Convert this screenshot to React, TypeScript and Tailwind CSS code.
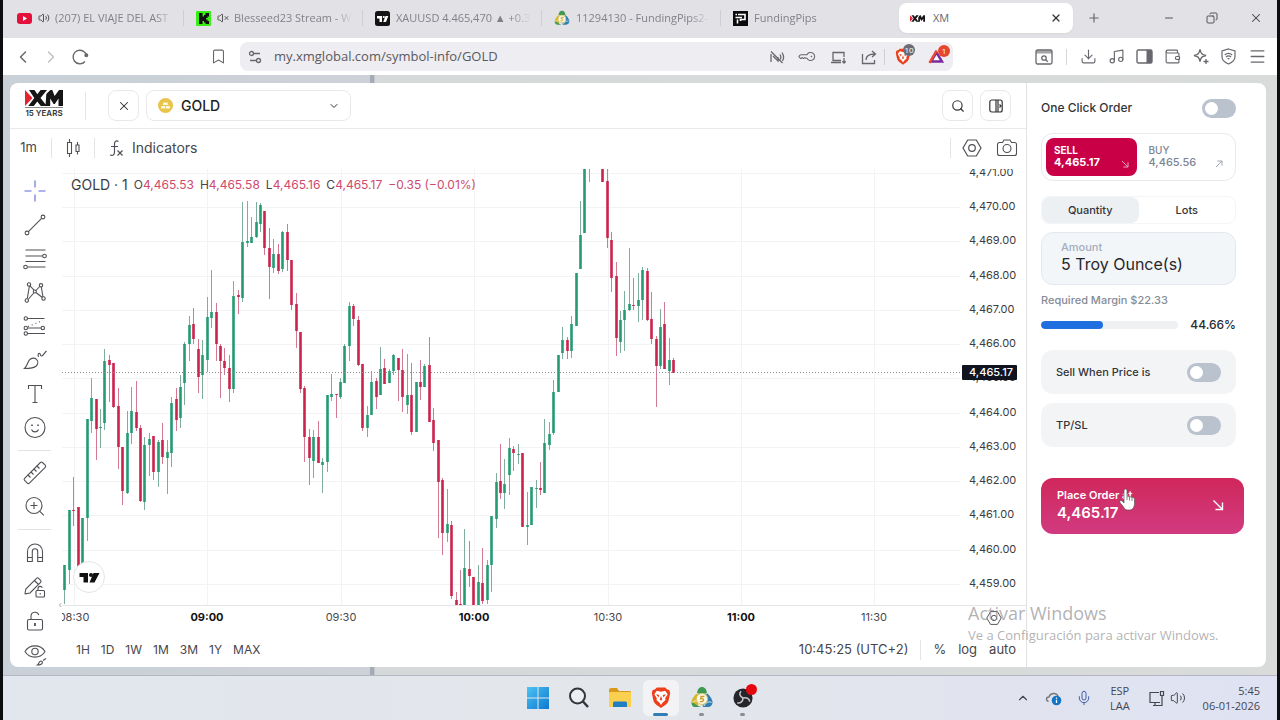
import React from "react";
import {
  Bookmark,
  ChevronDown,
  ChevronLeft,
  ChevronRight,
  ChevronUp,
  Copy,
  Download,
  KeyRound,
  Menu,
  Mic,
  Minus,
  Music,
  Plus,
  Search,
  Volume2,
  VolumeX,
  Wallet,
  X,
} from "lucide-react";

type Candle = [dir: "u" | "d", high: number, top: number, bottom: number, low: number];

/* One entry per minute: direction, wick top, body top, body bottom, wick bottom. */
const CANDLES: (Candle | null)[] = [
  ["u", 565, 565, 590, 604], ["u", 510, 510, 570, 584], ["d", 477, 510, 511, 526], ["d", 507, 507, 570, 570],
  ["u", 518, 518, 565, 565], ["u", 419, 419, 518, 541], ["u", 378, 398, 421, 433], ["d", 399, 399, 429, 460],
  ["u", 409, 427, 428, 448], ["u", 349, 361, 423, 430], ["d", 355, 360, 365, 402], ["d", 363, 363, 407, 408],
  ["d", 388, 406, 447, 469], ["d", 447, 447, 491, 505], ["u", 411, 433, 493, 494], ["u", 387, 411, 433, 444],
  ["d", 381, 412, 428, 431], ["d", 425, 428, 501, 502], ["u", 437, 445, 502, 510], ["u", 433, 439, 445, 476],
  ["d", 436, 436, 472, 480], ["u", 440, 442, 472, 487], ["d", 423, 440, 457, 464], ["u", 440, 452, 458, 494],
  ["u", 397, 403, 453, 467], ["d", 388, 399, 420, 431], ["u", 375, 387, 418, 428], ["u", 342, 344, 383, 405],
  ["u", 316, 325, 344, 361], ["d", 308, 324, 339, 344], ["d", 339, 349, 377, 393], ["u", 340, 355, 375, 399],
  ["u", 297, 317, 360, 372], ["u", 270, 312, 318, 328], ["d", 303, 312, 344, 361], ["d", 344, 346, 361, 398],
  ["d", 348, 361, 368, 375], ["d", 355, 368, 389, 402], ["u", 281, 296, 389, 393], ["d", 290, 295, 297, 314],
  ["u", 202, 242, 298, 302], ["u", 201, 241, 243, 247], ["u", 217, 237, 243, 243], ["u", 202, 222, 237, 238],
  ["u", 203, 205, 224, 232], ["d", 211, 211, 248, 255], ["d", 228, 248, 267, 299], ["u", 239, 254, 268, 273],
  ["d", 244, 254, 271, 274], ["u", 231, 232, 269, 272], ["d", 224, 232, 260, 271], ["d", 260, 260, 305, 310],
  ["d", 293, 304, 331, 348], ["d", 332, 332, 389, 393], ["d", 386, 388, 437, 462], ["d", 429, 437, 458, 485],
  ["u", 430, 437, 461, 478], ["d", 421, 437, 463, 463], ["u", 458, 462, 465, 493], ["u", 395, 395, 462, 472],
  ["u", 374, 394, 397, 401], ["d", 394, 394, 395, 418], ["u", 378, 382, 397, 399], ["u", 344, 346, 383, 383],
  ["u", 302, 306, 346, 361], ["d", 304, 306, 319, 326], ["d", 316, 320, 365, 366], ["d", 364, 364, 428, 431],
  ["u", 406, 415, 428, 437], ["u", 371, 382, 415, 415], ["d", 378, 381, 397, 409], ["u", 347, 369, 395, 395],
  ["d", 359, 368, 384, 384], ["u", 369, 371, 383, 383], ["u", 354, 355, 371, 375], ["d", 358, 358, 370, 401],
  ["d", 349, 370, 397, 412], ["u", 354, 395, 405, 414], ["d", 363, 395, 432, 435], ["u", 382, 382, 432, 432],
  ["d", 360, 382, 387, 400], ["u", 364, 366, 387, 387], ["d", 337, 365, 422, 422], ["d", 408, 420, 443, 451],
  ["d", 440, 440, 482, 538], ["d", 478, 480, 533, 555], ["u", 489, 524, 533, 542], ["d", 521, 525, 596, 599],
  ["d", 592, 600, 605, 605], ["d", 570, 604, 605, 605], ["u", 529, 568, 605, 605], ["d", 541, 569, 576, 587],
  ["d", 577, 577, 605, 605], ["u", 565, 582, 605, 605], ["d", 548, 583, 601, 604], ["u", 560, 565, 600, 604],
  ["u", 516, 516, 565, 592], ["u", 473, 482, 519, 528], ["d", 444, 481, 493, 499], ["u", 459, 484, 493, 509],
  ["u", 438, 448, 475, 495], ["d", 446, 449, 453, 471], ["u", 444, 454, 455, 464], ["d", 453, 453, 527, 527],
  ["u", 492, 525, 527, 545], ["u", 487, 487, 525, 525], ["u", 480, 488, 489, 508], ["d", 462, 488, 490, 495],
  ["u", 419, 443, 493, 493], ["u", 422, 434, 445, 450], ["u", 380, 392, 433, 435], ["u", 355, 355, 392, 392],
  ["u", 327, 340, 353, 359], ["d", 337, 340, 351, 359], ["u", 316, 324, 351, 358], ["u", 273, 273, 326, 326],
  ["u", 201, 235, 269, 269], ["u", 169, 169, 233, 233], ["u", 169, 169, 169, 182], null,
  null, ["d", 169, 169, 182, 182], ["d", 169, 181, 238, 248], ["d", 232, 240, 278, 292],
  ["d", 262, 276, 338, 356], ["u", 311, 320, 342, 353], ["u", 291, 310, 320, 351], ["u", 248, 304, 310, 311],
  ["d", 278, 305, 306, 310], ["u", 273, 300, 306, 322], ["u", 267, 270, 300, 320], ["d", 268, 271, 320, 321],
  ["d", 292, 319, 339, 344], ["d", 336, 339, 366, 407], ["u", 309, 327, 366, 369], ["d", 302, 324, 369, 369],
  ["u", 338, 360, 371, 385], ["d", 358, 360, 373, 373],
];

const PRICES = Array.from({ length: 13 }, (_, i) => 4471 - i);
const TIMES = ["08:30", "09:00", "09:30", "10:00", "10:30", "11:00", "11:30"];

const priceY = (p: number) => Math.round((4470 - p) * 34.27 + 39);

function Chart() {
  return (
    <svg viewBox="0 0 964 462" className="block h-full w-full font-[Inter,sans-serif]" role="img" aria-label="GOLD candlestick chart">
      <defs>
        <clipPath id="axis"><rect x="899" y="1" width="65" height="435" /></clipPath>
      </defs>
      {PRICES.map((p) => <rect key={p} x="0" y={priceY(p)} width="898" height="1" fill="#f3f3f5" />)}
      {TIMES.map((t, i) => <rect key={t} x={12 + Math.round(i * 133.4)} y="1" width="1" height="436" fill="#f3f3f5" />)}
      {CANDLES.map((c, i) => {
        if (!c) return null;
        const [dir, high, top, bottom, low] = c;
        const x = Math.round(2.4 + i * 4.445);
        const body = dir === "u" ? "#249b73" : "#cc234c";
        const wick = dir === "u" ? "#7fae9d" : "#d27a91";
        return (
          <g key={i}>
            <rect x={x} y={high - 168} width="1" height={Math.max(low - high, 1)} fill={wick} />
            {bottom > top && <rect x={x - 0.8} y={top - 168} width="2.600" height={bottom - top} fill={body} />}
          </g>
        );
      })}
      <line x1="0" x2="900" y1="204.5" y2="204.5" stroke="#8b8b90" strokeDasharray="1 2" />
      <rect x="0" y="437" width="964" height="1" fill="#e6e6ea" />
      <g clipPath="url(#axis)" fontSize="11" fill="#3c3c40">
        {PRICES.map((p) => (
          <text key={p} x="907" y={priceY(p) + 3}>{`4,${p - 4000}.00`}</text>
        ))}
      </g>
      <rect x="900" y="197" width="55" height="15" rx="1" fill="#11131f" />
      <text x="907" y="208" fontSize="11" fontWeight="500" fill="#fff">4,465.17</text>
      {TIMES.map((t, i) => {
        const hour = t.endsWith(":00");
        return (
          <text key={t} x={12 + Math.round(i * 133.4)} y="453" textAnchor="middle" fontSize="11" fontWeight={hour ? 700 : 400} fill={hour ? "#111" : "#4a4a4e"}>
            {t}
          </text>
        );
      })}
      <circle cx="27" cy="409" r="15.500" fill="#fff" stroke="#e4e4e8" />
      <path d="M17.500 405h8.500v9.500h-4.500v-5.500h-4zM32.500 414.500h-5l4-9.500h6z" fill="#111" />
      <circle cx="29" cy="407" r="2" fill="#111" />
    </svg>
  );
}

function Tool({ label, children }: { label: string; children: React.ReactNode }) {
  return (
    <button aria-label={label} className="flex h-[34px] w-full shrink-0 items-center justify-center">
      <svg viewBox="0 0 28 28" className="size-7" fill="none" stroke="#505056" strokeWidth="1.1">{children}</svg>
    </button>
  );
}

function ToolRail() {
  return (
    <div className="relative flex w-[52px] shrink-0 flex-col overflow-hidden pt-2 pr-[3px]">
      <Tool label="Cross"><path stroke="#5b66d6" d="M14 3.500v7M14 17.500v7M3.500 14h7M17.500 14h7" /></Tool>
      <Tool label="Trend line">
        <circle cx="6" cy="22" r="1.900" /><circle cx="22" cy="6" r="1.900" /><path d="M7.400 20.600 20.600 7.400" />
      </Tool>
      <Tool label="Fib retracement">
        <path d="M4.500 5h20M4.500 11h17.500M4.500 16.500h20M6.500 22h18" />
        <circle cx="23.500" cy="11" r="1.800" fill="#fff" /><circle cx="4.500" cy="22" r="1.800" fill="#fff" />
      </Tool>
      <Tool label="Patterns">
        <path d="m8.700 6.700 4.400 4.500M15 11.500 18.700 7.500M8.300 7.500 6.300 19.500M20.300 8l1.700 10M7.500 20l5.300-6M15 13.500l6 4.800" />
        <circle cx="8" cy="5.500" r="1.700" /><circle cx="20" cy="6.300" r="1.700" /><circle cx="13.800" cy="12.500" r="1.500" />
        <circle cx="5.800" cy="21.500" r="1.700" /><circle cx="22.500" cy="19.500" r="1.700" />
      </Tool>
      <Tool label="Prediction">
        <path d="M6.500 5.500h17M6.500 15h13.500M6.500 20.500h17.500" /><path strokeDasharray="1 3" d="m7 13.500 15-6" />
        <circle cx="4.800" cy="5.500" r="1.700" /><circle cx="4.800" cy="15" r="1.700" /><circle cx="4.800" cy="20.500" r="1.700" /><circle cx="21.800" cy="15" r="1.700" />
      </Tool>
      <Tool label="Brush">
        <path d="M3.500 21.500c2.500-2 3-6.500 5-8.700 2-2.200 5.200-2.200 7-.4s1.700 4.600-.3 6.600c-2.500 2.300-7 2.500-11.700 2.500zM17.500 10c-1-2.500 0-4.200 1.200-3.500 1 .6.500 2.500 2 2.500s2.800-3.500 4.800-5" />
      </Tool>
      <Tool label="Text"><path d="M7.500 8V4.500h13V8M14 4.500v17M11.500 21.500h5" /></Tool>
      <Tool label="Emoji">
        <circle cx="14" cy="12.500" r="10" /><path d="M10.500 14.500c1.200 3.200 5.800 3.200 7 0" /><path strokeWidth="1.600" d="M11 9.500v1.500M17 9.500v1.500" />
      </Tool>
      <span className="mx-2 my-1 h-px shrink-0 bg-[#e2e2e6]" />
      <Tool label="Measure">
        <path d="M3.600 20.300 19.400 4.500a1.500 1.500 0 0 1 2.100 0l2.700 2.700a1.500 1.500 0 0 1 0 2.100L8.400 25.100a1.500 1.500 0 0 1-2.100 0l-2.700-2.700a1.500 1.500 0 0 1 0-2.100zM7 17l2.500 2.500M10 14l2.500 2.500M13 11l2.500 2.500M16 8l2.500 2.500" />
      </Tool>
      <Tool label="Zoom in"><circle cx="13" cy="13.500" r="8" /><path d="m18.800 19.300 4 4M9.500 13.500h7M13 10v7" /></Tool>
      <span className="mx-2 my-1.5 h-px shrink-0 bg-[#e2e2e6]" />
      <Tool label="Magnet">
        <path d="M6.500 22.500v-10a7.500 7.500 0 0 1 15 0v10h-4.800v-10a2.700 2.700 0 0 0-5.400 0v10zM6.500 18.500h4.800M16.700 18.500h4.800" />
      </Tool>
      <Tool label="Stay in drawing mode">
        <path d="m4 20.500.8-4.500L15.500 5.300a1.500 1.500 0 0 1 2.100 0l2 2a1.500 1.500 0 0 1 0 2.100L9 20l-4.800.8zM13.500 7.500l4 4" />
        <rect x="15" y="17.500" width="8.500" height="6.500" rx="1" fill="#fff" /><path d="M17 17.500v-2a2.200 2.200 0 0 1 4.300-.6M19.200 20v1.500" />
      </Tool>
      <Tool label="Lock drawings">
        <rect x="6.500" y="12.500" width="15" height="10.500" rx="1.500" /><path d="M10 12.500V9a4 4 0 0 1 7.800-1" /><path strokeWidth="1.800" d="M14 16v3" />
      </Tool>
      <Tool label="Hide drawings">
        <path d="M4 10.500c4.500-7.500 15.500-7.500 20 0-4.500 7.500-15.500 7.500-20 0z" /><circle cx="14" cy="10.500" r="3.200" />
        <path d="M16.500 24c1.500-1 1.500-4 3.500-4s2.500 4-3.500 4zM22 19.500l3-2" />
      </Tool>
      <span className="absolute right-0 bottom-[58px] text-[9px] leading-none text-[#aaa]">‹</span>
    </div>
  );
}

function Toggle({ label }: { label: string }) {
  return (
    <input
      type="checkbox"
      role="switch"
      aria-label={label}
      className="relative h-[19px] w-[34px] shrink-0 appearance-none rounded-full bg-[#bac2ce] before:absolute before:top-[3px] before:left-[3px] before:size-[13px] before:rounded-full before:bg-white"
    />
  );
}

function XmLogo({ className }: { className: string }) {
  return (
    <svg viewBox="0 0 38 16" className={className} aria-label="XM">
      <path d="M0 0v16l7.500-8z" fill="#e3242f" />
      <path d="M4 0h5.500l2.800 4.300L15.600 0H22l-6.500 8 6.300 8h-6l-3.500-4.500L8.800 16H3.300l6-8zM20.500 16l.8-12L25.300 0h2l2.300 6L34 0h4v16h-4.500V8.500L29.800 14h-1.200L25.200 8.500V16z" fill="#151515" />
    </svg>
  );
}

function Tab({ icon, sound, children }: { icon: React.ReactNode; sound?: React.ReactNode; children: string }) {
  return (
    <button className="flex h-full min-w-0 basis-[178px] items-center text-left">
      <span className="flex min-w-0 flex-1 items-center gap-1.5 pr-2.5 pl-3">
        {icon}
        <span className="flex min-w-0 flex-1 items-center gap-[5px]">
          {sound}
          <span className="min-w-0 flex-1 overflow-hidden whitespace-nowrap mask-r-from-85%">{children}</span>
        </span>
      </span>
    </button>
  );
}

const Divider = () => <span className="h-4 w-px shrink-0 bg-[#cfced4]" />;

const MtIcon = ({ className }: { className: string }) => (
  <svg viewBox="0 0 24 24" className={className} aria-hidden="true">
    <path d="M12 1c3 0 4.500 2.500 5 5.500l-1 4H8l-1-4C7.500 3.500 9 1 12 1z" fill="#3d9a50" />
    <path d="M7 7.500c-3 2-6 6.500-6 9.500 2 1 4 3 7 4l3-9z" fill="#d6b52c" />
    <path d="M17 7.500c3 2 6 6.500 6 9.500 0 3-2 5-5 5h-5l-1-9z" fill="#2f7fb4" />
    <path d="M1 17c3 .5 6 4 10 5H5c-3 0-4-2.500-4-5z" fill="#3d9a50" />
    <path d="M7 8c2 1 8 1 10 0M2 17c3-2 6-3 7 4M22 17c-3-1-6 0-8 4" fill="none" stroke="#eef3e6" />
    <circle cx="12" cy="13.500" r="5.800" fill="#fbf8e6" stroke="#d9c463" />
    <path d="M14.500 11H11l-.4 2.300c4-.8 4.400 3.600-.9 3" fill="none" stroke="#c99d2c" strokeWidth="1.400" />
  </svg>
);

const BraveIcon = ({ className }: { className: string }) => (
  <svg viewBox="0 0 24 26" className={className} aria-hidden="true">
    <path d="M7 1h10l2.500 2.500L22 4l1 4-2 9c-1 4-6 6.500-9 8.500C9 23.500 4 21 3 17L1 8l1-4 2.500-.5z" fill="#ed3f1c" />
    <path d="m7 5 5 1 5-1 3 4-3 5 .5 2L14 19l-2 3-2-3-3.500-3L7 14 4 9z" fill="#fff" />
    <path d="m6 9 4 1-1 3zM18 9l-4 1 1 3zM12 11l1.500 4.500L12 17l-1.500-1.500z" fill="#ed3f1c" />
  </svg>
);

function TabStrip() {
  return (
    <div className="flex h-[38px] shrink-0 items-center bg-[#e2e1e6] pb-0.5 pl-[2px] text-[11px] text-[#828187]">
      <Tab
        icon={<svg viewBox="0 0 15 11" className="h-[11px] w-[15px] shrink-0"><rect width="15" height="11" rx="3" fill="#e3103c" /><path d="m6 3 4 2.500L6 8z" fill="#fff" /></svg>}
        sound={<Volume2 className="size-3 shrink-0 text-[#555]" />}
      >
        (207) EL VIAJE DEL AST
      </Tab>
      <Divider />
      <Tab
        icon={<svg viewBox="0 0 15 15" className="size-[15px] shrink-0"><rect width="15" height="15" rx="1" fill="#38ee16" /><path d="M3 2h3.500v3.500H8V4h1.500V2H13v3.500h-1.500V7H10v1.500h1.500V10H13v3H9.500v-1.500H8V10H6.500v3H3z" fill="#111" /></svg>}
        sound={<VolumeX className="size-3 shrink-0 text-[#555]" />}
      >
        Blesseed23 Stream - W
      </Tab>
      <Divider />
      <Tab icon={<svg viewBox="0 0 15 15" className="size-[15px] shrink-0"><rect width="15" height="15" rx="2.500" fill="#131313" /><path d="M2 5h5v6H4.500V7.500H2zM11 11H8.200l2.300-6h2.800z" fill="#fff" /><circle cx="8.800" cy="6" r="1.100" fill="#fff" /></svg>}>
        XAUUSD 4.465,470 ▲ +0.3
      </Tab>
      <Divider />
      <Tab icon={<MtIcon className="size-[16px] shrink-0" />}>11294130 - FundingPips2-</Tab>
      <Divider />
      <Tab icon={<svg viewBox="0 0 15 15" className="size-[15px] shrink-0"><rect width="15" height="15" fill="#0b0b0b" /><path d="M5 3.500h7v5H7.500V10M2.500 3.500h1.500M2.500 6.500H9M4.500 8.500v4" fill="none" stroke="#fff" strokeWidth="1.600" /></svg>}>
        FundingPips
      </Tab>
      <div className="flex h-[30px] w-[174px] shrink-0 items-center rounded-lg bg-white px-[11px] shadow-xs">
        <XmLogo className="h-[7px] w-[15px] shrink-0" />
        <span className="flex-1 pl-2 text-[#67666b]">XM</span>
        <button aria-label="Close tab"><X className="size-3 text-[#333]" strokeWidth={2.5} /></button>
      </div>
      <button aria-label="New tab" className="ml-3.5"><Plus className="size-3.5 text-[#66656a]" /></button>
      <div className="ml-auto flex shrink-0 items-center gap-[31px] pr-3.5 text-[#444]">
        <button aria-label="Minimize"><Minus className="size-3" strokeWidth={1.8} /></button>
        <button aria-label="Restore"><Copy className="size-3 -scale-x-100" strokeWidth={1.8} /></button>
        <button aria-label="Close"><X className="size-3.5" strokeWidth={1.8} /></button>
      </div>
    </div>
  );
}

function AddressRow() {
  return (
    <div className="flex h-[37px] shrink-0 items-center bg-white text-[#68676d]">
      <div className="flex w-[237px] shrink-0 items-center">
        <button aria-label="Back" className="ml-2.5"><ChevronLeft className="size-5" strokeWidth={1.8} /></button>
        <button aria-label="Forward" className="ml-2 text-[#c2c1c6]"><ChevronRight className="size-5" strokeWidth={1.8} /></button>
        <button aria-label="Reload" className="ml-2.5">
          <svg viewBox="0 0 18 18" className="size-[18px]" fill="none" stroke="currentColor" strokeWidth="1.400"><path d="M14 13.500A6.800 6.800 0 1 1 15.600 8" /><circle cx="15.300" cy="7.300" r="1.300" fill="currentColor" /></svg>
        </button>
        <button aria-label="Bookmark" className="ml-auto mr-[13px]"><Bookmark className="size-[17px]" strokeWidth={1.5} /></button>
      </div>
      <div className="flex h-[29px] w-[713px] min-w-0 shrink items-center rounded-lg bg-[#eeedf1] pl-2">
        <svg viewBox="0 0 14 14" className="size-[14px] shrink-0" fill="none" stroke="currentColor" strokeWidth="1.300"><circle cx="3.500" cy="3.500" r="2" /><path d="M6 3.500h6M2 10.500h6" /><circle cx="10.500" cy="10.500" r="2" /></svg>
        <input aria-label="Address" defaultValue="my.xmglobal.com/symbol-info/GOLD" className="ml-3 min-w-0 flex-1 bg-transparent text-[13px] text-[#5a5960] outline-none" />
        <div className="flex items-center gap-[15px]">
          <svg viewBox="0 0 16 16" className="size-4" fill="none" stroke="currentColor" strokeWidth="1.300"><path d="M2 2.500 13.500 14M2 5v8M4 7l5 5V8M11 5.500c1 1.500 1 3.500.3 5M13 3.500c2 3 2 6 .5 8.500" /></svg>
          <KeyRound className="size-[15px] rotate-45" strokeWidth={1.7} />
          <svg viewBox="0 0 16 16" className="size-4" fill="none" stroke="currentColor" strokeWidth="1.300"><path d="M11 11.500H3V3.500h11V8M1 13.500h10M14 9v5M12.300 12.300 14 14l1.700-1.700" /></svg>
          <svg viewBox="0 0 16 16" className="size-4" fill="none" stroke="currentColor" strokeWidth="1.300"><path d="M1.500 5v9.500h12V11M5 11c0-4 3-6 9-6M11 2l3.500 3L11 8" /></svg>
        </div>
        <span className="ml-[7px] h-4 w-px bg-[#d0cfd5]" />
        <button aria-label="Shields" className="relative ml-2.5"><BraveIcon className="h-[17px] w-4" /><span className="absolute -top-1 left-2 size-3 rounded-full bg-[#6b6d76] text-center text-[8px] leading-3 text-white">10</span></button>
        <button aria-label="Rewards" className="relative mr-2 ml-[17px]">
          <svg viewBox="0 0 17 15" className="h-[15px] w-[17px]"><path d="M8.500 3.500 3 12.500h11z" fill="#fff" stroke="#7b2a9b" strokeWidth="2.400" /><path d="M8.500 1.500 1.500 13.800" stroke="#ed4b2a" strokeWidth="2.400" /></svg>
          <span className="absolute -top-1 left-2.5 size-3 rounded-full bg-[#e8452d] text-center text-[8px] leading-3 text-white">1</span>
        </button>
      </div>
      <div className="ml-auto flex shrink-0 items-center gap-[11px] pr-2.5">
        <svg viewBox="0 0 18 16" className="h-4 w-[18px]" fill="none" stroke="currentColor" strokeWidth="1.300"><rect x="1" y="1" width="16" height="14" rx="1.500" /><path d="M1 3h16" strokeWidth="3" opacity=".6" /><circle cx="9" cy="9" r="2.200" /><path d="m10.700 10.700 2 2" /></svg>
        <span className="mx-0.5 h-4 w-px bg-[#d6d5da]" />
        <Download className="size-[17px]" strokeWidth={1.6} />
        <Music className="size-[17px]" strokeWidth={1.6} />
        <svg viewBox="0 0 17 17" className="size-[17px]"><rect x="1" y="2" width="15" height="13" rx="1.500" fill="none" stroke="currentColor" strokeWidth="1.400" /><path d="M10.500 2H16v13h-5.500z" fill="currentColor" /></svg>
        <Wallet className="size-[17px]" strokeWidth={1.6} />
        <svg viewBox="0 0 17 17" className="size-[17px]" fill="none" stroke="currentColor" strokeWidth="1.300"><path d="M8 1.500c.8 4 2 5.200 6 6-4 .8-5.200 2-6 6-.8-4-2-5.200-6-6 4-.8 5.200-2 6-6zM14 11v5M11.500 13.500h5" /></svg>
        <svg viewBox="0 0 17 17" className="size-[17px]" fill="none" stroke="currentColor" strokeWidth="1.200"><path d="M8.500 1 15 3v5.500c0 3.500-3 6-6.500 7.500C5 14.500 2 12 2 8.500V3zM4.800 7c2.200-2 5.200-2 7.400 0M6 9c1.500-1.300 3.500-1.300 5 0M7.500 11c.6-.5 1.400-.5 2 0" /></svg>
        <Menu className="size-[19px]" strokeWidth={1.6} />
      </div>
    </div>
  );
}

function SymbolHeader() {
  return (
    <div className="flex h-[46px] shrink-0 items-center border-b border-[#e9e9ed]">
      <a href="#home" aria-label="XM 15 years" className="ml-[15px] flex w-[38px] flex-col items-center pb-1">
        <XmLogo className="h-4 w-[38px]" />
        <span className="mt-px h-px w-full bg-[#8a8a8a]" />
        <span className="mt-0.5 text-[8px] leading-[7px] font-semibold whitespace-nowrap text-[#333]">15 YEARS</span>
      </a>
      <span className="ml-[22px] h-7 w-px bg-[#e6e6ea]" />
      <button aria-label="Close symbol" className="ml-[22px] flex size-[31px] items-center justify-center rounded-lg border border-[#e8e8ec]"><X className="size-3.5" strokeWidth={1.8} /></button>
      <div className="relative ml-[7px] flex h-[31px] w-[205px] items-center rounded-lg border border-[#e8e8ec]">
        <svg viewBox="0 0 15 15" className="pointer-events-none absolute left-[11px] size-[15px]"><circle cx="7.500" cy="7.500" r="7.500" fill="#e8c44c" /><path d="M5.500 4.500h4l.8 2.500H4.700zM3.500 8h3.600l.5 2.500H2.800zM8 8h3.500l.8 2.500H8z" fill="#fff8df" /></svg>
        <select aria-label="Symbol" className="h-full w-full appearance-none bg-transparent pl-[34px] text-[14px] font-medium text-[#222] outline-none"><option>GOLD</option></select>
        <ChevronDown className="pointer-events-none absolute right-2.5 size-3" strokeWidth={2} />
      </div>
      <div className="ml-auto flex gap-[7px] pr-[15px]">
        <button aria-label="Search" className="flex size-[31px] items-center justify-center rounded-lg border border-[#e8e8ec]"><Search className="size-3.5" /></button>
        <button aria-label="Toggle panel" className="flex size-[31px] items-center justify-center rounded-lg border border-[#e8e8ec]">
          <svg viewBox="0 0 14 14" className="size-3.5" fill="none" stroke="currentColor" strokeWidth="1.200"><rect x=".8" y="1" width="12.400" height="12" rx="2" /><path d="M7 1v12M9 1v12M10.500 5.500 12 7l-1.500 1.500" /></svg>
        </button>
      </div>
    </div>
  );
}

const Hex = ({ className }: { className: string }) => (
  <svg viewBox="0 0 20 20" className={className} fill="none" stroke="#505056" strokeWidth="1.200"><path d="M5.700 2h8.600L19 10l-4.700 8H5.700L1 10z" /><circle cx="10" cy="10" r="3.300" /></svg>
);

function ChartToolbar() {
  return (
    <div className="flex h-[37px] shrink-0 items-center text-[13px] text-[#46464b]">
      <button className="ml-[9px] w-[19px] whitespace-nowrap">1m</button>
      <span className="ml-[13px] h-5 w-px bg-[#e4e4e8]" />
      <button aria-label="Candles" className="ml-3">
        <svg viewBox="0 0 18 20" className="h-5 w-[18px]" fill="none" stroke="#505056" strokeWidth="1.100"><path d="M3.500 4.500h4v11h-4zM5.500 1v3.500M5.500 15.500V19M12 7h3v6.500h-3zM13.500 4v3M13.500 13.500v3" /></svg>
      </button>
      <span className="ml-3 h-5 w-px bg-[#e4e4e8]" />
      <button className="ml-[13px] flex items-center gap-2 text-[14px]">
        <svg viewBox="0 0 16 18" className="h-[18px] w-4" fill="none" stroke="#505056" strokeWidth="1.200"><path d="M10.500 2.500c-2.500-1.500-4 0-4 2.500v8c0 3-1.500 4-4.500 3M3 7.500h7M9.500 11.500l5 5M14.500 11.500l-5 5" /></svg>
        Indicators
      </button>
      <span className="ml-auto h-5 w-px bg-[#e4e4e8]" />
      <button aria-label="Chart settings" className="ml-[11px]"><Hex className="size-5" /></button>
      <button aria-label="Snapshot" className="mr-2 ml-3.5">
        <svg viewBox="0 0 22 20" className="h-5 w-[22px]" fill="none" stroke="#505056" strokeWidth="1.100"><path d="M3.500 4.500h3L8 2h6l1.500 2.500h3a2 2 0 0 1 2 2v9a2 2 0 0 1-2 2h-15a2 2 0 0 1-2-2v-9a2 2 0 0 1 2-2z" /><circle cx="11" cy="10.500" r="4" /></svg>
      </button>
    </div>
  );
}

function Quote({ name, value }: { name: string; value: string }) {
  return <span className="text-[#46464b]">{name}<span className="text-[#d0496d]">{value}</span></span>;
}

function ChartArea() {
  return (
    <div className="flex min-w-0 flex-1 flex-col">
      <div className="relative min-h-0 flex-1 pt-0.5">
        <Chart />
        <div className="absolute top-[9px] left-[9px] flex items-center gap-1.5 text-[12px] leading-5 whitespace-nowrap">
          <span className="text-[14px] text-[#3c3c40]">GOLD · 1</span>
          <Quote name="O" value="4,465.53" />
          <Quote name="H" value="4,465.58" />
          <Quote name="L" value="4,465.16" />
          <Quote name="C" value="4,465.17" />
          <span className="text-[#d0496d]">−0.35 (−0.01%)</span>
        </div>
        <button aria-label="Axis settings" className="absolute right-6 bottom-1"><Hex className="size-4" /></button>
      </div>
      <div className="flex h-[37px] shrink-0 items-center pt-0.5 pr-2.5 pl-3.5 text-[#46464b]">
        <div className="flex gap-[11px] text-[12px]">
          {["1H", "1D", "1W", "1M", "3M", "1Y", "MAX"].map((r) => <button key={r}>{r}</button>)}
        </div>
        <div className="ml-auto flex items-center gap-3 text-[13px]">
          <button>10:45:25 (UTC+2)</button>
          <span className="h-5 w-px bg-[#e4e4e8]" />
          <button>%</button>
          <button>log</button>
          <button>auto</button>
        </div>
      </div>
    </div>
  );
}

const Arrow = ({ up, className }: { up?: boolean; className: string }) => (
  <svg viewBox="0 0 12 12" className={className} fill="none" stroke="currentColor" strokeWidth="1.400">
    {up ? <path d="M1.500 10.500 10.500 1.500M3.500 1.500h7v7" /> : <path d="m1.500 1.500 9 9M10.500 3.500v7h-7" />}
  </svg>
);

function OrderPanel() {
  return (
    <aside className="flex w-[240px] shrink-0 flex-col border-l border-[#e2e2e6] pt-[15px] pr-[30px] pl-[14px] text-[11px] leading-4 font-medium text-[#333439]">
      <div className="flex h-5 items-center justify-between text-[12px]">One Click Order<Toggle label="One Click Order" /></div>
      <div className="mt-[15px] flex h-12 rounded-xl border border-[#e9e9ed] p-1">
        <button className="flex flex-1 items-end justify-between rounded-lg bg-[#c90046] px-2 pt-1 pb-2 text-left text-[11px] leading-3 font-bold text-white">
          <span><span className="block text-[10px]">SELL</span>4,465.17</span><Arrow className="size-2 opacity-70" />
        </button>
        <button className="flex flex-1 items-end justify-between pt-1 pr-2 pb-2 pl-3 text-left text-[11px] leading-3 font-medium text-[#7d8492]">
          <span><span className="block text-[10px]">BUY</span>4,465.56</span><Arrow up className="size-2 opacity-80" />
        </button>
      </div>
      <div className="mt-[15px] flex h-7 rounded-lg border border-[#f5f5f7]">
        <button className="flex-1 rounded-lg bg-[#edf0f3]">Quantity</button>
        <button className="flex-1">Lots</button>
      </div>
      <label className="mt-2 flex h-[53px] flex-col justify-center rounded-xl border border-[#e3e8ef] bg-[#f3f6f9] px-[19px] pb-1 leading-[14px] text-[#a3adbd]">
        Amount
        <input defaultValue="5 Troy Ounce(s)" className="h-5 w-full bg-transparent text-[16px] leading-5 font-normal text-[#26272b] outline-none" />
      </label>
      <p className="mt-[7px] text-[#858b97]">Required Margin $22.33</p>
      <div className="mt-[9px] flex items-center justify-between gap-3">
        <span className="h-2 flex-1 overflow-hidden rounded-full bg-[#eff0f2]"><span className="block h-full w-[45%] rounded-full bg-[#1f6fe0]" /></span>
        <span className="text-[12px] text-[#2a2b30]">44.66%</span>
      </div>
      <div className="mt-[17px] flex h-11 items-center justify-between rounded-xl bg-[#f3f4f6] px-[15px]">Sell When Price is<Toggle label="Sell When Price is" /></div>
      <div className="mt-[9px] flex h-11 items-center justify-between rounded-xl bg-[#f3f4f6] px-[15px]">TP/SL<Toggle label="TP/SL" /></div>
      <button className="relative -mr-2 mt-[31px] flex h-14 items-center justify-between rounded-xl bg-linear-to-b from-[#d0265b] to-[#d13a80] px-4 pb-0.5 text-left font-semibold text-white">
        <span><span className="block">Place Order at</span><span className="block text-[15px] leading-5">4,465.17</span></span>
        <Arrow className="mr-1 size-3" />
        <svg viewBox="0 0 16 22" className="absolute top-[11px] left-[78px] h-[22px] w-4" aria-hidden="true"><path d="M5 1.500a1.500 1.500 0 0 1 3 0V7l6 1.500c1 .3 1.500 1 1.500 2v4c0 3-1.500 6.500-5 6.500H8.500c-2 0-3-1-4-3L1 13.500c-.8-1.800 1-2.700 2.200-1.500L5 14z" fill="#fff" stroke="#555" strokeWidth=".7" /><path d="M8 7v4M10.500 8v3.500M13 8.500V12" stroke="#666" strokeWidth=".8" /></svg>
      </button>
    </aside>
  );
}

function Taskbar() {
  return (
    <div className="relative flex h-[45px] shrink-0 items-center justify-end border-t border-[#b4b7c2] bg-linear-to-r from-[#e2e6ee] via-[#e3e6ea] to-[#dfe2f2] text-[11px] text-[#45464e]">
      <div className="absolute inset-x-0 top-1 flex justify-center gap-[5px]">
        <button aria-label="Start" className="flex size-[36px] items-center justify-center">
          <svg viewBox="0 0 22 22" className="size-[22px]"><defs><linearGradient id="win" x2="1" y2="1"><stop stopColor="#4cc3f2" /><stop offset="1" stopColor="#0c78d0" /></linearGradient></defs><path d="M0 0h10.500v10.500H0zM11.500 0H22v10.500H11.500zM0 11.500h10.500V22H0zM11.500 11.500H22V22H11.500z" fill="url(#win)" /></svg>
        </button>
        <button aria-label="Search" className="flex size-[36px] items-center justify-center">
          <svg viewBox="0 0 22 22" className="size-[22px]" fill="none" stroke="#33363d"><circle cx="9.500" cy="9" r="7.500" strokeWidth="2" fill="#eceef2" /><path d="m15 14.500 5 5.500" strokeWidth="2.500" /></svg>
        </button>
        <button aria-label="File Explorer" className="flex size-[36px] items-center justify-center">
          <svg viewBox="0 0 24 22" className="h-[22px] w-6"><path d="M1 3a2 2 0 0 1 2-2h6l2 3h11a1 1 0 0 1 1 1v4H1z" fill="#d99a1c" /><rect x="1" y="5" width="22" height="15" rx="1" fill="#fbd04f" /><path d="M5 20v-4a1.500 1.500 0 0 1 1.500-1.500h11A1.500 1.500 0 0 1 19 16v4z" fill="#1f7ec4" /></svg>
        </button>
        <button aria-label="Brave" className="flex size-[36px] flex-col items-center rounded-md bg-[#f3f3f6] pt-1.5">
          <BraveIcon className="h-[23px] w-5 shrink-0" /><span className="mt-1 h-[3px] w-[15px] shrink-0 rounded-full bg-[#2f7fb5]" />
        </button>
        <button aria-label="MetaTrader" className="flex size-[36px] flex-col items-center pt-1.5">
          <MtIcon className="h-[23px] w-6 shrink-0" /><span className="mt-1 h-[3px] w-[5px] shrink-0 rounded-full bg-[#8b8d94]" />
        </button>
        <button aria-label="OBS Studio" className="relative flex size-[36px] flex-col items-center pt-1.5">
          <svg viewBox="0 0 24 24" className="h-[23px] w-6 shrink-0"><circle cx="12" cy="12.500" r="10" fill="#26262a" /><path d="M12 12.500c-4-2-4-5-2-7M12 12.500c4-1 7 1 7 4M12 12.500c0 4-3 6-6 5" fill="none" stroke="#c6c6ca" strokeWidth="1.600" /></svg>
          <span className="absolute top-1 right-1 size-[11px] rounded-full bg-[#e5090f]" /><span className="mt-1 h-[3px] w-[5px] shrink-0 rounded-full bg-[#8b8d94]" />
        </button>
      </div>
      <div className="relative flex items-center pr-[17px]">
        <ChevronUp className="size-3.5" />
        <svg viewBox="0 0 17 15" className="ml-[15px] h-[15px] w-[17px]"><path d="M3.500 10.500C.5 9.500 1 6 4 6c1-4 7-5 9-1" fill="none" stroke="#777" strokeWidth="1.400" /><circle cx="11.500" cy="9.500" r="4.800" fill="#1274c4" /><path d="M11.500 8.700V12M11.500 6.500v1.200" stroke="#fff" strokeWidth="1.300" /></svg>
        <Mic className="ml-3.5 size-4 text-[#4260a8]" strokeWidth={1.5} />
        <span className="ml-[18px] text-center leading-[15px]">ESP<br />LAA</span>
        <svg viewBox="0 0 17 17" className="ml-[18px] size-[17px]" fill="none" stroke="currentColor" strokeWidth="1.200"><path d="M11 2.500H2v10h10M5 15.500h7M7 12.500v3M12.500 1.500h3v4h-3zM14 5.500v10h-2" /></svg>
        <Volume2 className="ml-[5px] size-4" strokeWidth={1.5} />
        <span className="ml-[17px] text-right leading-[15px]">5:45<br />06-01-2026</span>
      </div>
    </div>
  );
}

export default function App() {
  return (
    <div className="relative flex h-screen min-h-[720px] flex-col overflow-hidden border-x-[3px] border-[#0c0d10] bg-[#d9dcdc] font-['Open_Sans','Noto_Sans',sans-serif]">
      <TabStrip />
      <AddressRow />
      <main className="flex min-h-0 flex-1 bg-[linear-gradient(to_right,#c9d0d7,#cdd2d8_28.8%,#a3abb6_28.8%,#a3abb6_29.1%,#d6d9da_29.2%,#d9dbdb)] pt-2 pr-[11px] pb-2 pl-[7px] font-[Inter,sans-serif]">
        <div className="flex min-w-0 flex-1 overflow-hidden rounded-lg bg-white text-[#333]">
          <section className="flex min-w-0 flex-1 flex-col">
            <SymbolHeader />
            <ChartToolbar />
            <div className="flex min-h-0 flex-1"><ToolRail /><ChartArea /></div>
          </section>
          <OrderPanel />
        </div>
      </main>
      <Taskbar />
      <div className="pointer-events-none absolute right-[48px] bottom-[75px] w-[261px] text-[13px] leading-5 whitespace-nowrap text-[#8f8f94]/70">
        <p className="text-[18px] leading-6">Activar Windows</p>
        <p>Ve a Configuración para activar Windows.</p>
      </div>
    </div>
  );
}
